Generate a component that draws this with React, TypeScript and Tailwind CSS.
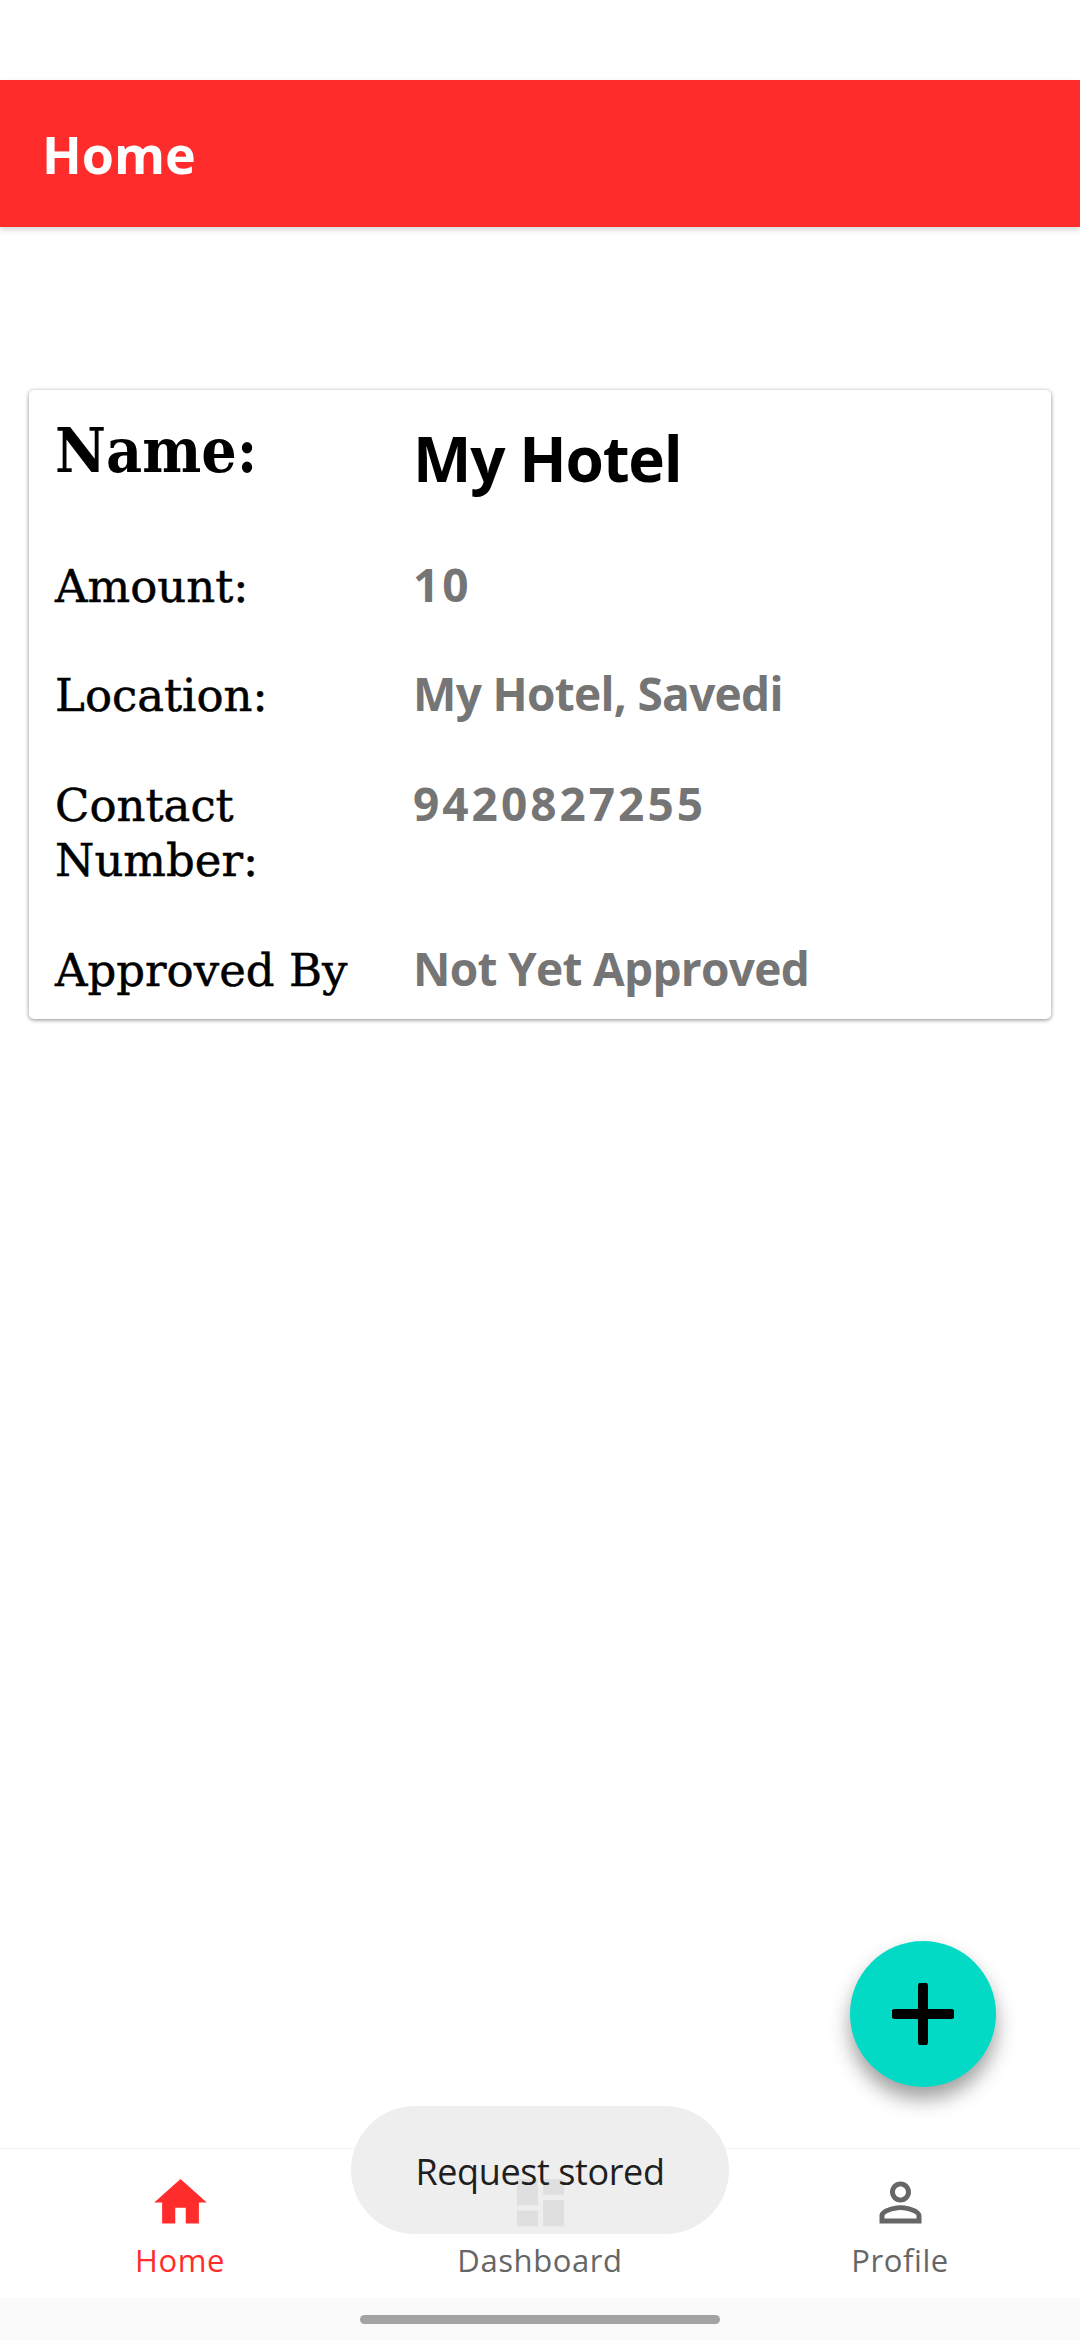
import { ReactNode } from "react";

const SLAB = "font-['DejaVu_Serif',serif]";
const SANS = "font-['Open_Sans','Noto_Sans',sans-serif]";

function Row({ label, children, className }: { label: ReactNode; children: ReactNode; className: string }) {
  return (
    <div className={`grid grid-cols-[358px_1fr] ${className}`}>
      <div className={`${SLAB} whitespace-nowrap text-[45px] leading-[55px] text-black [-webkit-text-stroke:0.5px_black]`}>{label}</div>
      <div className={`${SANS} mt-[-2px] text-[46px] leading-[55px] font-bold tracking-[-0.7px] text-[#757575]`}>{children}</div>
    </div>
  );
}

function NavItem({ label, path, active }: { label: string; path: string; active?: boolean }) {
  return (
    <div className="relative flex flex-1 flex-col items-center pt-[22px]">
      <svg viewBox="0 0 24 24" className={`h-[63px] w-[63px] ${active ? "fill-[#ff2c2c]" : "fill-[#666666]"}`}>
        <path d={path} />
      </svg>
      <span className={`${SANS} mt-[5px] text-[31px] leading-[42px] tracking-[0.6px] ${active ? "text-[#ff2c2c]" : "text-[#666666]"}`}>
        {label}
      </span>
    </div>
  );
}

export default function App() {
  return (
    <div className="relative flex h-[2340px] w-[1080px] flex-col overflow-hidden bg-white">
      <div className="h-[80px] shrink-0 bg-white" />
      <header className="flex h-[147px] shrink-0 items-center bg-[#ff2c2c] px-[42px] shadow-[0_3px_6px_rgba(0,0,0,0.16)]">
        <h1 className={`${SANS} text-[52px] font-bold text-white`}>Home</h1>
      </header>

      <main className="flex-1 px-[29px] pt-[163px]">
        <div className="h-[629px] rounded-[5px] bg-white pl-[26px] shadow-[0_1px_4px_rgba(0,0,0,0.45)]">
          <div className="grid grid-cols-[358px_1fr] pt-[26px]">
            <div className={`${SLAB} font-stretch-condensed text-[62px] font-bold leading-[70px] text-black`}>Name:</div>
            <div className={`${SANS} pt-[7px] text-[62px] font-bold leading-[70px] tracking-[-1.2px] text-black`}>My Hotel</div>
          </div>
          <Row label="Amount:" className="mt-[66px]"><span className="tracking-[3px]">10</span></Row>
          <Row label="Location:" className="mt-[54px]">My Hotel, Savedi</Row>
          <Row label={<>Contact<br />Number:</>} className="mt-[55px]"><span className="tracking-[3px]">9420827255</span></Row>
          <Row label="Approved By" className="mt-[55px]">Not Yet Approved</Row>
        </div>
      </main>

      <nav className="flex h-[150px] shrink-0 border-t border-[#f3f3f3] bg-white">
        <NavItem active label="Home" path="M10 20v-6h4v6h5v-8h3L12 3 2 12h3v8z" />
        <NavItem label="Dashboard" path="M3 13h8V3H3v10zm0 8h8v-6H3v6zm10 0h8V11h-8v10zm0-18v6h8V3h-8z" />
        <NavItem
          label="Profile"
          path="M12 5.9c1.16 0 2.1.94 2.1 2.1s-.94 2.1-2.1 2.1S9.9 9.16 9.9 8s.94-2.1 2.1-2.1m0 9c2.97 0 6.1 1.46 6.1 2.1v1.1H5.9V17c0-.64 3.13-2.1 6.1-2.1M12 4C9.79 4 8 5.79 8 8s1.79 4 4 4 4-1.79 4-4-1.79-4-4-4zm0 9c-2.67 0-8 1.34-8 4v3h16v-3c0-2.66-5.33-4-8-4z"
        />
      </nav>
      <div className="flex h-[42px] shrink-0 justify-center bg-[#fafafa] pt-[17px]">
        <div className="h-[9px] w-[360px] rounded-full bg-[#a3a3a3]" />
      </div>

      {/* floats over the page */}
      <button className="absolute left-[850px] top-[1941px] flex h-[146px] w-[146px] items-center justify-center rounded-full bg-[#03dac5] shadow-[0_12px_20px_rgba(0,0,0,0.38)]">
        <svg viewBox="0 0 62 62" className="h-[62px] w-[62px]">
          <path d="M31 3v56M3 31h56" stroke="#000" strokeWidth="10" strokeLinecap="round" fill="none" />
        </svg>
      </button>
      <div className={`${SANS} absolute left-[351px] top-[2106px] flex h-[128px] w-[378px] items-start justify-center rounded-[64px] bg-[#ececec]/90 pt-[41px] text-[36px] leading-[50px] tracking-[-0.4px] text-[#1f1f1f]`}>
        Request stored
      </div>
    </div>
  );
}
